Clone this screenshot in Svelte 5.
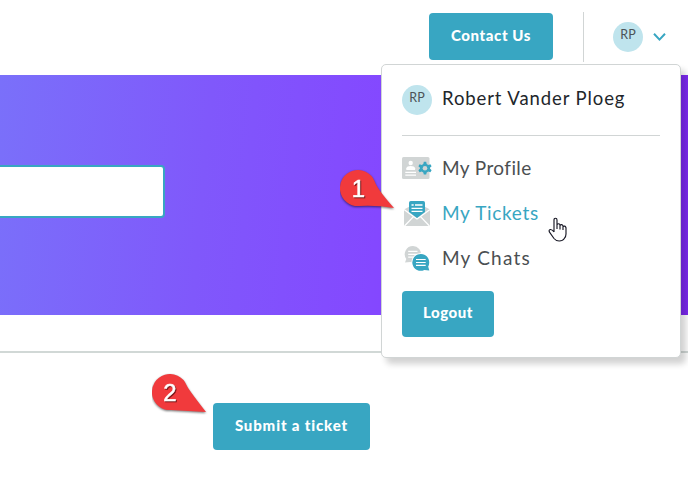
<script lang="ts">
    const user = { name: 'Robert Vander Ploeg', initials: 'RP' };

    const links = [
        { id: 'profile', label: 'My Profile' },
        { id: 'tickets', label: 'My Tickets' },
        { id: 'chats', label: 'My Chats' }
    ];

    let active = 'tickets';
</script>

<div class="page">
    <header>
        <button class="btn contact">Contact Us</button>
        <div class="account">
            <span class="avatar">{user.initials}</span>
            <svg class="chevron" width="14" height="10" viewBox="0 0 14 10">
                <path d="M1 1.8 L6.5 7.6 L12 1.8" fill="none" stroke="#38a6c2" stroke-width="2" />
            </svg>
        </div>

        <div class="menu">
            <div class="who">
                <span class="avatar">{user.initials}</span>
                <span class="name">{user.name}</span>
            </div>
            <nav>
                {#each links as link}
                    <a href="#{link.id}" class={link.id} class:active={active === link.id} on:click={() => (active = link.id)}>
                        <svg width="30" height="28" viewBox="0 0 30 28">
                            {#if link.id === 'profile'}
                                <rect x="0" y="3" width="27.5" height="22" rx="1.5" fill="#d1d5d5" />
                                <circle cx="8.7" cy="9" r="2.2" fill="#fff" />
                                <path d="M4.3 16 V14.2 Q5 12 8.7 12 Q12.5 12 13.1 14.2 V16 Z" fill="#fff" />
                                <path d="M3.3 18.3 H14 M3.3 21.2 H14" stroke="#fff" stroke-width="1.2" />
                                <path d="M21.8 7.8 H24.2 L24.7 10 L26.3 10.9 L28.4 10.2 L29.6 12.2 L28 13.7 V14.6 L29.6 16.2 L28.4 18.2 L26.3 17.5 L24.7 18.4 L24.2 20.6 H21.8 L21.3 18.4 L19.7 17.5 L17.6 18.2 L16.4 16.2 L18 14.6 V13.7 L16.4 12.2 L17.6 10.2 L19.7 10.9 L21.3 10 Z" fill="#38a6c2" />
                                <circle cx="23" cy="14.2" r="2.3" fill="#d1d5d5" />
                            {:else if link.id === 'tickets'}
                                <path d="M2 10.5 L15 3.5 L28 10.5 V27 H2 Z" fill="#d1d5d5" />
                                <path d="M2 10.5 L15 20 L28 10.5 M2.5 27 L11.5 17.6 M27.5 27 L18.5 17.6" fill="none" stroke="#fff" stroke-width="1.3" />
                                <path d="M7 3.8 Q7 2 8.8 2 H21.2 Q23 2 23 3.8 V13 L15 19 L7 13 Z" fill="#38a6c2" />
                                <path d="M9.5 6 H11.7 M13 6 H20.5 M9.5 9.3 H20.5 M9.5 12.4 H20.5" stroke="#fff" stroke-width="1.3" />
                            {:else}
                                <path d="M11 2 A8.2 8.2 0 1 1 8.4 18 L3 18.4 L4.3 15 A8.2 8.2 0 0 1 11 2 Z" fill="#d1d5d5" />
                                <path d="M6.2 7.4 H15.5 M6.2 10.3 H15.5 M6.2 13.2 H12" stroke="#fff" stroke-width="1.2" />
                                <circle cx="18.8" cy="18.4" r="9.4" fill="#fff" />
                                <path d="M18.8 10 A8.4 8.4 0 0 1 26.2 22.4 L27.3 26.5 L22.3 26 A8.4 8.4 0 1 1 18.8 10 Z" fill="#38a6c2" />
                                <path d="M14 15.5 H23.7 M14 18.5 H23.7 M14 21.4 H23.7" stroke="#fff" stroke-width="1.2" />
                            {/if}
                        </svg>
                        <span>{link.label}</span>
                    </a>
                {/each}
            </nav>
            <button class="btn logout">Logout</button>
        </div>
    </header>

    <section class="hero">
        <input aria-label="Search" />
    </section>

    <main>
        <button class="btn submit">Submit a ticket</button>
    </main>

    <!-- step markers and pointer, laid over the page -->
    <svg class="pin one" width="58" height="44" viewBox="0 0 58 44">
        <path d="M54 39 Q37 36 19 37 A18 18 0 1 1 34.5 12 Q37 20 54 39 Z" />
        <text x="18.5" y="27.5">1</text>
    </svg>
    <svg class="pin two" width="58" height="44" viewBox="0 0 58 44">
        <path d="M54 39 L19 37 A18 18 0 1 1 34.5 12 Q36 16 54 39 Z" />
        <text x="18" y="27.5">2</text>
    </svg>
    <svg class="cursor" width="20" height="26" viewBox="0 0 20 26">
        <path
            d="M6 15 V3 Q6 1.2 7.5 1.2 Q9 1.2 9 3 V9 V7.7 Q10.7 5.8 12 7.8 V10 V8.2 Q13.8 6.7 15 8.7 V11 V9.5 Q17.2 8.2 18 10.7 V17 Q18 19.5 16.3 21.5 Q14.8 24 11.2 24 Q8 24 6 21.5 L1.5 15.2 Q.4 13 2.3 12.5 Q4 12.3 6 15 M9 9 V12 M12 10 V12.5 M15 11 V13"
            fill="#fff"
            stroke="#171724"
            stroke-width="1.15"
            stroke-linejoin="round"
        />
    </svg>
</div>

<style>
    :global(body) {
        margin: 0;
        background: #fff;
    }

    .page {
        position: relative;
        width: 688px;
        height: 480px;
        overflow: hidden;
        font-family: Lato, sans-serif;
        color: #22262b;
    }

    header {
        position: relative;
        display: flex;
        justify-content: flex-end;
        align-items: flex-start;
        box-sizing: border-box;
        height: 75px;
        padding: 12px 21px 0 0;
    }

    .btn {
        height: 47px;
        padding: 0 0 4px;
        border: 0;
        border-radius: 4px;
        background: #38a6c2;
        color: #fff;
        font: 900 15px Lato, sans-serif;
        white-space: nowrap;
    }

    .contact {
        width: 124px;
        margin: 1px 30px 0 0;
        letter-spacing: 0.6px;
    }

    .account {
        display: flex;
        align-items: center;
        gap: 10px;
        height: 50px;
        padding-left: 29px;
        border-left: 1px solid #d1d5d5;
    }

    .avatar {
        width: 30px;
        height: 30px;
        border-radius: 50%;
        background: #bfe4ed;
        color: #4b5357;
        font-size: 12.5px;
        line-height: 26px;
        text-align: center;
    }

    .menu {
        position: absolute;
        z-index: 1;
        top: 64px;
        right: 7px;
        box-sizing: border-box;
        width: 300px;
        height: 294px;
        padding: 20px;
        border: 1px solid #d1d5d5;
        border-radius: 5px;
        background: #fff;
        box-shadow: 5px 6px 6px rgba(0, 0, 0, 0.18);
    }

    .who {
        display: flex;
        gap: 10px;
        height: 50px;
        border-bottom: 1px solid #d1d5d5;
    }

    .name {
        font-size: 18.5px;
        line-height: 27px;
        letter-spacing: 0.9px;
        white-space: nowrap;
    }

    nav {
        padding-top: 10px;
    }

    nav a {
        display: flex;
        align-items: center;
        gap: 10px;
        height: 45px;
        color: #4b4f52;
        font-size: 19px;
        letter-spacing: 0.7px;
        text-decoration: none;
    }

    nav .profile {
        letter-spacing: 0.4px;
    }

    nav .chats {
        letter-spacing: 1.2px;
    }

    nav a svg {
        position: relative;
        top: -0.5px;
    }

    nav a span {
        padding-bottom: 3px;
    }

    nav .active {
        color: #38a6c2;
    }

    .logout {
        width: 92px;
        height: 46px;
        margin-top: 10px;
        letter-spacing: 0.5px;
    }

    .hero {
        display: flex;
        align-items: center;
        box-sizing: border-box;
        height: 240px;
        padding-bottom: 7px;
        background: linear-gradient(95deg, #7a70fa 0%, #8058fb 30%, #8448ff 55%, #842fff 88%, #7b29ee 100%);
    }

    input {
        box-sizing: border-box;
        width: 185px;
        height: 53px;
        margin-left: -20px;
        border: 2px solid #38a6c2;
        border-radius: 4px;
        background: #fff;
    }

    main {
        margin-top: 36px;
        padding: 50px 0 0 213px;
        border-top: 2px solid #d1d8d6;
    }

    .submit {
        width: 157px;
        letter-spacing: 0.85px;
    }

    .pin {
        position: absolute;
        z-index: 2;
    }

    .pin path {
        fill: #f13a3c;
        filter: drop-shadow(0 1px 1px rgba(0, 0, 0, 0.55));
    }

    .pin text {
        fill: #fff;
        stroke: #fff;
        stroke-width: 0.5px;
        font: 24px "Liberation Sans", sans-serif;
        text-anchor: middle;
        filter: drop-shadow(1px 1px 0.5px rgba(40, 0, 0, 0.6));
    }

    .one {
        top: 169px;
        left: 340px;
    }

    .two {
        top: 373px;
        left: 152px;
    }

    .cursor {
        position: absolute;
        z-index: 3;
        top: 217px;
        left: 548px;
    }
</style>
